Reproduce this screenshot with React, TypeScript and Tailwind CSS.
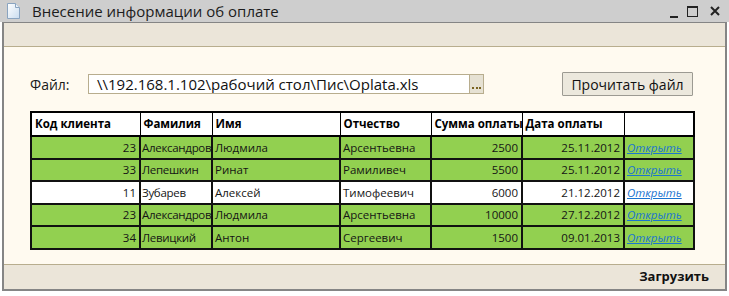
import React from "react";

type Row = {
  code: string;
  last: string;
  first: string;
  middle: string;
  sum: string;
  date: string;
  paid: boolean;
};

const rows: Row[] = [
  { code: "23", last: "Александров", first: "Людмила", middle: "Арсентьевна", sum: "2500", date: "25.11.2012", paid: true },
  { code: "33", last: "Лепешкин", first: "Ринат", middle: "Рамиливеч", sum: "5500", date: "25.11.2012", paid: true },
  { code: "11", last: "Зубарев", first: "Алексей", middle: "Тимофеевич", sum: "6000", date: "21.12.2012", paid: false },
  { code: "23", last: "Александров", first: "Людмила", middle: "Арсентьевна", sum: "10000", date: "27.12.2012", paid: true },
  { code: "34", last: "Левицкий", first: "Антон", middle: "Сергеевич", sum: "1500", date: "09.01.2013", paid: true },
];

const font = { fontFamily: '"Open Sans", "Noto Sans", sans-serif' };

function PageIcon() {
  return (
    <svg width="13" height="16" viewBox="0 0 13 16">
      <defs>
        <linearGradient id="pg" x1="0" y1="0" x2="1" y2="1">
          <stop offset="0" stopColor="#ffffff" />
          <stop offset="1" stopColor="#c9dcef" />
        </linearGradient>
      </defs>
      <path d="M0.5 0.5 H8.5 L12.5 4.5 V15.5 H0.5 Z" fill="url(#pg)" stroke="#8aa4c0" />
      <path d="M8.5 0.5 V4.5 H12.5" fill="#e8f0f8" stroke="#8aa4c0" />
    </svg>
  );
}

function WindowControls() {
  return (
    <div className="flex items-center h-full">
      <div className="w-[8px] h-[2px] bg-[#222] mt-[12px]" />
      <div className="ml-[9px] w-[11px] h-[11px] border-[1.5px] border-[#222] border-t-[2px]" />
      <svg className="ml-[12px]" width="10" height="10" viewBox="0 0 10 10">
        <path d="M1 1 L9 9 M9 1 L1 9" stroke="#222" strokeWidth="2" />
      </svg>
    </div>
  );
}

const th = "border border-black border-b-2 text-left pl-[3px] font-bold whitespace-nowrap overflow-hidden";
const td = "border-2 border-[#111] whitespace-nowrap overflow-hidden";

export default function App() {
  return (
    <div className="w-[729px] h-[296px] bg-white overflow-hidden" style={font}>
      <div className="h-[22px] bg-[#cecece] flex items-center pl-[7px] pr-[9px]">
        <PageIcon />
        <span className="ml-[12px] text-[15px] text-[#1c1c1c] leading-none">Внесение информации об оплате</span>
        <div className="ml-auto h-full">
          <WindowControls />
        </div>
      </div>

      <div className="ml-[2px] w-[725px] border-x-2 border-b-2 border-t border-[#858585]">
        <div className="h-[24px] bg-[#ebe5d9] border-b border-[#b8ad8e]" />

        <div className="h-[218px] bg-[#fffaf0] border-b border-[#b8ad8e] pl-[26px] pt-[25px]">
          <div className="flex items-center h-[24px]">
            <span className="text-[14px] text-[#1a1a1a] w-[58px]">Файл:</span>
            <div className="flex h-[20px] w-[396px] border border-[#b8ad8e] bg-white">
              <div className="flex-1 pl-[8px] text-[15px] leading-[18px] text-[#111] whitespace-nowrap overflow-hidden">
                \\192.168.1.102\рабочий стол\Пис\Oplata.xls
              </div>
              <div className="w-[14px] border-l border-[#b8ad8e] bg-[#e6e1d3] flex items-end justify-center gap-[1.5px] pb-[4px]">
                <span className="w-[2px] h-[2px] bg-[#7a6320]" />
                <span className="w-[2px] h-[2px] bg-[#7a6320]" />
                <span className="w-[2px] h-[2px] bg-[#7a6320]" />
              </div>
            </div>
            <div className="ml-[78px] h-[24px] w-[131px] border border-[#9c9a92] bg-[#ece8dd] rounded-[1px] text-[14px] text-[#111] flex items-center justify-center">
              Прочитать файл
            </div>
          </div>

          <table className="mt-[15px] table-fixed border-collapse border-2 border-black text-[11.5px] text-[#151515]" style={{ width: 663 }}>
            <colgroup>
              <col className="w-[109px]" />
              <col className="w-[72px]" />
              <col className="w-[128px]" />
              <col className="w-[91px]" />
              <col className="w-[91px]" />
              <col className="w-[102px]" />
              <col className="w-[70px]" />
            </colgroup>
            <thead>
              <tr className="h-[24px] bg-white text-black">
                <th className={th}>Код клиента</th>
                <th className={th}>Фамилия</th>
                <th className={th}>Имя</th>
                <th className={th}>Отчество</th>
                <th className={th}>Сумма оплаты</th>
                <th className={th}>Дата оплаты</th>
                <th className="border border-black border-b-2" />
              </tr>
            </thead>
            <tbody>
              {rows.map((r, i) => (
                <tr key={i} className={`h-[22.5px] ${r.paid ? "bg-[#92d050]" : "bg-white"}`}>
                  <td className={`${td} text-right pr-[3px]`}>{r.code}</td>
                  <td className={`${td} pl-[1px] tracking-[-0.3px]`}>{r.last}</td>
                  <td className={`${td} pl-[2px]`}>{r.first}</td>
                  <td className={`${td} pl-[2px]`}>{r.middle}</td>
                  <td className={`${td} text-right pr-[3px]`}>{r.sum}</td>
                  <td className={`${td} text-right pr-[3px]`}>{r.date}</td>
                  <td className={`${td} pl-[2px]`}>
                    <span className="italic underline text-[#1a74d0]">Открыть</span>
                  </td>
                </tr>
              ))}
            </tbody>
          </table>
        </div>

        <div className="h-[24px] bg-[#ebe5d9] flex items-center justify-end pr-[16px]">
          <span className="text-[13px] font-bold text-[#111]">Загрузить</span>
        </div>
      </div>
    </div>
  );
}
